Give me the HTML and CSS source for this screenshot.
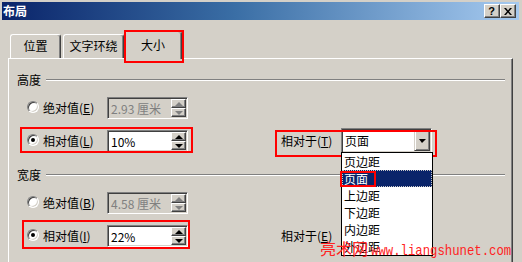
FILE: index.html
```html
<!DOCTYPE html>
<html lang="zh-CN">
<head>
  <meta charset="UTF-8" />
  <meta name="viewport" content="width=device-width, initial-scale=1.0"/>
  <title>布局</title>
  <link rel="stylesheet" href="styles.css">
</head>
<body>
  <div class="window">
    <div class="titlebar">
      <span class="title">布局</span>
      <div class="caps">
        <span class="cap help">?</span>
        <span class="cap close">
          <svg width="8" height="7" viewBox="0 0 8 7"><path d="M0 0h2l2 2.5 2-2.5h2l-3 3.5 3 3.5h-2l-2-2.5-2 2.5h-2l3-3.5z" fill="#000"/></svg>
        </span>
      </div>
    </div>

    <div class="tabs">
      <div class="tab t-pos">位置</div>
      <div class="tab t-wrap">文字环绕</div>
      <div class="tab active mark">大小</div>
    </div>

    <div class="panel">
      <div class="group">
        <div class="legend"><span>高度</span><i></i></div>
        <div class="row">
          <div class="opt">
            <span class="radio"></span>
            <span class="lbl">绝对值(<u>E</u>)</span>
            <div class="spin disabled">
              <span class="val">2.93 厘米</span>
              <span class="btns"><b class="up"></b><b class="down"></b></span>
            </div>
          </div>
        </div>
        <div class="row">
          <div class="opt mark m1">
            <span class="radio on"></span>
            <span class="lbl">相对值(<u>L</u>)</span>
            <div class="spin">
              <span class="val">10%</span>
              <span class="btns"><b class="up"></b><b class="down"></b></span>
            </div>
          </div>
          <div class="rel mark m2">
            <span class="lbl">相对于(<u>T</u>)</span>
            <div class="combo">
              <span class="val">页面</span>
              <span class="drop"><b></b></span>
              <ul class="list">
                <li>页边距</li>
                <li class="sel mark">页面</li>
                <li>上边距</li>
                <li>下边距</li>
                <li>内边距</li>
                <li>外边距</li>
              </ul>
            </div>
          </div>
        </div>
      </div>

      <div class="group g2">
        <div class="legend"><span>宽度</span><i></i></div>
        <div class="row">
          <div class="opt">
            <span class="radio"></span>
            <span class="lbl">绝对值(<u>B</u>)</span>
            <div class="spin disabled">
              <span class="val">4.58 厘米</span>
              <span class="btns"><b class="up"></b><b class="down"></b></span>
            </div>
          </div>
        </div>
        <div class="row">
          <div class="opt mark m4">
            <span class="radio on"></span>
            <span class="lbl">相对值(<u>I</u>)</span>
            <div class="spin">
              <span class="val">22%</span>
              <span class="btns"><b class="up"></b><b class="down"></b></span>
            </div>
          </div>
          <div class="rel">
            <span class="lbl">相对于(<u>E</u>)</span>
            <div class="combo">
              <span class="val">页面</span>
              <span class="drop"><b></b></span>
            </div>
          </div>
        </div>
      </div>
    </div>

    <div class="watermark">亮术网<span>www.liangshunet.com</span></div>
  </div>
</body>
</html>
```

FILE: styles.css
```css
body {
  margin: 0;
  background: #d4d0c8;
  font-family: "Noto Sans CJK SC", "Liberation Sans", sans-serif;
  font-size: 12px;
  color: #000;
}
u {
  text-decoration: underline;
}
.window {
  position: relative;
  width: 522px;
  height: 262px;
  box-sizing: border-box;
  padding: 2px 3px 0 2px;
  background: #d4d0c8;
  overflow: hidden;
}

/* title bar */
.titlebar {
  height: 18px;
  display: flex;
  align-items: center;
  justify-content: space-between;
  padding: 0 3px 0 1px;
  background: linear-gradient(to right, #0a246a, #3a6ea5 45%, #a6caf0);
}
.title {
  color: #fff;
  font-weight: bold;
  font-size: 12px;
  line-height: 14px;
}
.caps {
  display: flex;
}
.cap {
  width: 16px;
  height: 14px;
  box-sizing: border-box;
  background: #d4d0c8;
  border: 1px solid;
  border-color: #fff #404040 #404040 #fff;
  box-shadow: inset -1px -1px #808080;
  display: flex;
  align-items: center;
  justify-content: center;
  font-family: "Liberation Sans", sans-serif;
  font-weight: bold;
  font-size: 11px;
  line-height: 12px;
}
.help {
  padding-right: 1px;
}

/* tabs */
.tabs {
  margin-top: 11px;
  height: 27px;
  display: flex;
  align-items: flex-end;
  padding-left: 8px;
}
.tab {
  height: 24px;
  box-sizing: border-box;
  border: 1px solid;
  border-color: #fff #404040 transparent #fff;
  border-bottom: none;
  border-radius: 3px 3px 0 0;
  box-shadow: inset -1px 0 #808080;
  text-align: center;
  line-height: 22px;
  background: #d4d0c8;
}
.t-pos {
  width: 51px;
}
.t-wrap {
  width: 61px;
  margin-left: 2px;
}
.tab.active {
  width: 58px;
  height: 28px;
  margin-bottom: -1px;
  line-height: 25px;
  z-index: 1;
}

/* red annotation frames */
.mark {
  position: relative;
}
.mark::after {
  content: '';
  position: absolute;
  border: 2px solid #f00;
  pointer-events: none;
}
.tab.mark::after {
  top: -2px;
  bottom: -4px;
  left: -1px;
  right: -3px;
}
.m1::after {
  top: -3px;
  bottom: -1px;
  left: 0;
  right: 0;
}
.m4::after {
  top: -5px;
  bottom: -2px;
  left: 2px;
  right: 3px;
}
.m2::after {
  top: 0;
  bottom: -5px;
  left: -6px;
  right: -5px;
}

/* panel */
.panel {
  margin-left: 6px;
  width: 505px;
  height: 210px;
  box-sizing: border-box;
  border-top: 1px solid #fff;
  border-left: 1px solid #fff;
  border-right: 1px solid #404040;
  box-shadow: inset -1px 0 #808080;
}
.group {
  padding-top: 14px;
}
.group.g2 {
  padding-top: 16px;
}
.legend {
  display: flex;
  align-items: center;
  height: 14px;
  line-height: 14px;
  padding-left: 8px;
  margin-right: 7px;
}
.legend i {
  flex: 1;
  margin-left: 5px;
  height: 0;
  border-top: 1px solid #808080;
  border-bottom: 1px solid #fff;
}
.row {
  display: flex;
  height: 22px;
  margin-top: 10px;
}
.row + .row {
  margin-top: 11px;
}
.opt {
  display: flex;
  align-items: center;
  width: 173px;
  margin-left: 11px;
  padding-left: 7px;
  box-sizing: border-box;
}
.radio {
  width: 12px;
  height: 12px;
  box-sizing: border-box;
  border-radius: 50%;
  background: #fff;
  border: 1px solid;
  border-color: #808080 #fff #fff #808080;
  box-shadow: inset 1px 1px #404040, inset -1px -1px #d4d0c8;
  display: flex;
  align-items: center;
  justify-content: center;
  margin-top: -2px;
}
.radio.on::before {
  content: '';
  width: 4px;
  height: 4px;
  border-radius: 50%;
  background: #000;
}
.lbl {
  line-height: 14px;
  white-space: nowrap;
}
.opt .lbl {
  width: 64px;
  margin-left: 4px;
}

/* spin boxes */
.spin {
  width: 81px;
  height: 22px;
  box-sizing: border-box;
  display: flex;
  align-items: stretch;
  background: #fff;
  border: 1px solid;
  border-color: #808080 #fff #fff #808080;
  box-shadow: inset 1px 1px #404040, inset -1px -1px #d4d0c8;
  padding: 1px 1px 1px 2px;
}
.spin.disabled {
  background: #d4d0c8;
  color: #808080;
}
.spin .val {
  flex: 1;
  line-height: 19px;
  padding-left: 1px;
}
.btns {
  width: 15px;
  display: flex;
  flex-direction: column;
}
.btns b {
  flex: 1;
  box-sizing: border-box;
  background: #d4d0c8;
  border: 1px solid;
  border-color: #fff #404040 #404040 #fff;
  box-shadow: inset -1px -1px #808080;
  display: flex;
  align-items: center;
  justify-content: center;
}
.btns b::before {
  content: '';
  border-left: 4px solid transparent;
  border-right: 4px solid transparent;
}
.btns .up::before {
  border-bottom: 4px solid #000;
}
.btns .down::before {
  border-top: 4px solid #000;
}
.disabled .btns .up::before {
  border-bottom-color: #808080;
}
.disabled .btns .down::before {
  border-top-color: #808080;
}

/* combo */
.rel {
  display: flex;
  align-items: center;
  margin-left: 88px;
}
.rel .lbl {
  width: 60px;
}
.combo {
  position: relative;
  width: 91px;
  height: 25px;
  margin: -2px 0 -1px;
  box-sizing: border-box;
  display: flex;
  background: #fff;
  border: 1px solid;
  border-color: #808080 #fff #fff #808080;
  box-shadow: inset 1px 1px #404040, inset -1px -1px #d4d0c8;
  padding: 1px;
}
.combo .val {
  flex: 1;
  line-height: 21px;
  padding-left: 2px;
}
.drop {
  width: 16px;
  box-sizing: border-box;
  background: #d4d0c8;
  border: 1px solid;
  border-color: #d4d0c8 #404040 #404040 #d4d0c8;
  box-shadow: inset 1px 1px #fff, inset -1px -1px #808080;
  display: flex;
  align-items: center;
  justify-content: center;
}
.drop b {
  border-left: 3px solid transparent;
  border-right: 4px solid transparent;
  border-top: 4px solid #000;
  margin-top: 1px;
}
.list {
  position: absolute;
  top: 100%;
  left: -1px;
  width: 92px;
  margin: 0;
  padding: 0;
  list-style: none;
  box-sizing: border-box;
  background: #fff;
  border: 1px solid #000;
  z-index: 2;
}
.list li {
  height: 17px;
  line-height: 17px;
  padding-left: 2px;
}
.list li.sel {
  background: #0a246a;
  color: #fff;
  outline: 1px dotted #c8c8c8;
  outline-offset: -1px;
}
.list li.sel::after {
  top: 1px;
  left: -2px;
  width: 32px;
  height: 12px;
}

/* site watermark */
.watermark {
  position: absolute;
  left: 320px;
  top: 238px;
  z-index: 3;
  color: #f22;
  font-size: 16px;
  line-height: 20px;
  white-space: nowrap;
}
.watermark span {
  display: inline-block;
  margin-left: 3px;
  font-family: "Liberation Mono", monospace;
  font-size: 15px;
  transform: scaleX(0.82);
  transform-origin: left center;
}
```
